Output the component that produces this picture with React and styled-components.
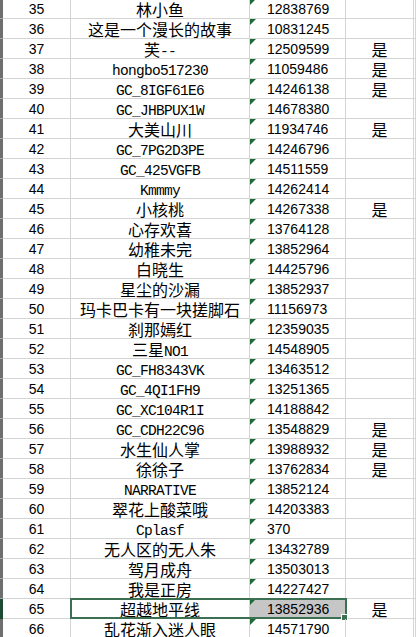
import React from 'react';
import styled, { createGlobalStyle } from 'styled-components';

const GlobalStyle = createGlobalStyle`
	html, body {
		margin: 0;
		padding: 0;
		background: #fff;
		overflow: hidden;
	}
	* {
		box-sizing: border-box;
	}
`

const rows = [
	[35, '林小鱼', '12838769', false],
	[36, '这是一个漫长的故事', '10831245', false],
	[37, '芙--', '12509599', true],
	[38, 'hongbo517230', '11059486', true],
	[39, 'GC_8IGF61E6', '14246138', true],
	[40, 'GC_JHBPUX1W', '14678380', false],
	[41, '大美山川', '11934746', true],
	[42, 'GC_7PG2D3PE', '14246796', false],
	[43, 'GC_425VGFB', '14511559', false],
	[44, 'Kmmmy', '14262414', false],
	[45, '小核桃', '14267338', true],
	[46, '心存欢喜', '13764128', false],
	[47, '幼稚未完', '13852964', false],
	[48, '白晓生', '14425796', false],
	[49, '星尘的沙漏', '13852937', false],
	[50, '玛卡巴卡有一块搓脚石', '11156973', false],
	[51, '刹那嫣红', '12359035', false],
	[52, '三星NO1', '14548905', false],
	[53, 'GC_FH8343VK', '13463512', false],
	[54, 'GC_4QI1FH9', '13251365', false],
	[55, 'GC_XC104R1I', '14188842', false],
	[56, 'GC_CDH22C96', '13548829', true],
	[57, '水生仙人掌', '13988932', true],
	[58, '徐徐子', '13762834', true],
	[59, 'NARRATIVE', '13852124', false],
	[60, '翠花上酸菜哦', '14203383', false],
	[61, 'Cplasf', '370', false],
	[62, '无人区的无人朱', '13432789', false],
	[63, '驾月成舟', '13503013', false],
	[64, '我是正房', '14227427', false],
	[65, '超越地平线', '13852936', true],
	[66, '乱花渐入迷人眼', '14571790', false],
]

const ACTIVE_ROW = 65

const Sheet = styled.div`
	margin-top: -1px;
	width: 416px;
`

const Row = styled.div`
	display: grid;
	grid-template-columns: 3px 68px 179px 96px 68px 1fr;
	height: 20px;
	position: relative;
`

const Strip = styled.div`
	background: ${p => p.$active ? '#1d4a32' : '#6e6e6e'};
	border-bottom: 1px solid ${p => p.$active ? '#1d4a32' : '#a8a8a8'};
`

const Cell = styled.div`
	position: relative;
	display: flex;
	align-items: center;
	justify-content: ${p => p.$align || 'center'};
	padding-left: ${p => p.$indent || 0}px;
	padding-top: 1px;
	border-right: 1px solid #d4d4d4;
	border-bottom: 1px solid #d4d4d4;
	background: ${p => p.$shade ? '#c6c6c6' : 'transparent'};
	white-space: nowrap;
	color: #000;
	line-height: 16px;
`

const Num = styled.span`
	font-family: "Liberation Sans", Arial, sans-serif;
	font-size: 14px;
	line-height: 16px;
`

const Text = styled.span`
	display: inline-block;
	line-height: 17px;
	height: 17px;
`

const Latin = styled.span`
	font-family: "Liberation Mono", monospace;
	font-size: 14.5px;
	letter-spacing: -0.7px;
	line-height: 1;
`

const Han = styled.span`
	font-family: "Noto Sans CJK SC", sans-serif;
	font-size: 16px;
	line-height: 1;
`

const Flag = styled.span`
	position: absolute;
	top: 0;
	left: 0;
	width: 0;
	height: 0;
	border-top: 6px solid #1f6b38;
	border-right: 6px solid transparent;
`

const Selection = styled.div`
	position: absolute;
	top: -1px;
	left: 70px;
	width: 277px;
	height: 21px;
	border: 2px solid #3b7152;
	pointer-events: none;
`

const Handle = styled.div`
	position: absolute;
	top: 15px;
	left: 341px;
	width: 7px;
	height: 7px;
	background: #3b7152;
	border: 1px solid #fff;
`

function Name({ text }) {
	const parts = text.split(/([\x00-\x7f]+)/).filter(Boolean)
	return (
		<Text>
			{parts.map((part, i) => (
				/^[\x00-\x7f]+$/.test(part)
					? <Latin key={i}>{part}</Latin>
					: <Han key={i}>{part}</Han>
			))}
		</Text>
	)
}

export default function App() {
	return (
		<>
			<GlobalStyle />
			<Sheet>
				{rows.map(([n, name, id, yes]) => {
					const active = n === ACTIVE_ROW
					return (
						<Row key={n}>
							<Strip $active={active} />
							<Cell><Num>{n}</Num></Cell>
							<Cell><Name text={name} /></Cell>
							<Cell $align="flex-start" $indent={17} $shade={active}>
								<Flag />
								<Num>{id}</Num>
							</Cell>
							<Cell>{yes && <Name text="是" />}</Cell>
							<Cell />
							{active && <Selection />}
							{active && <Handle />}
						</Row>
					)
				})}
			</Sheet>
		</>
	)
}
